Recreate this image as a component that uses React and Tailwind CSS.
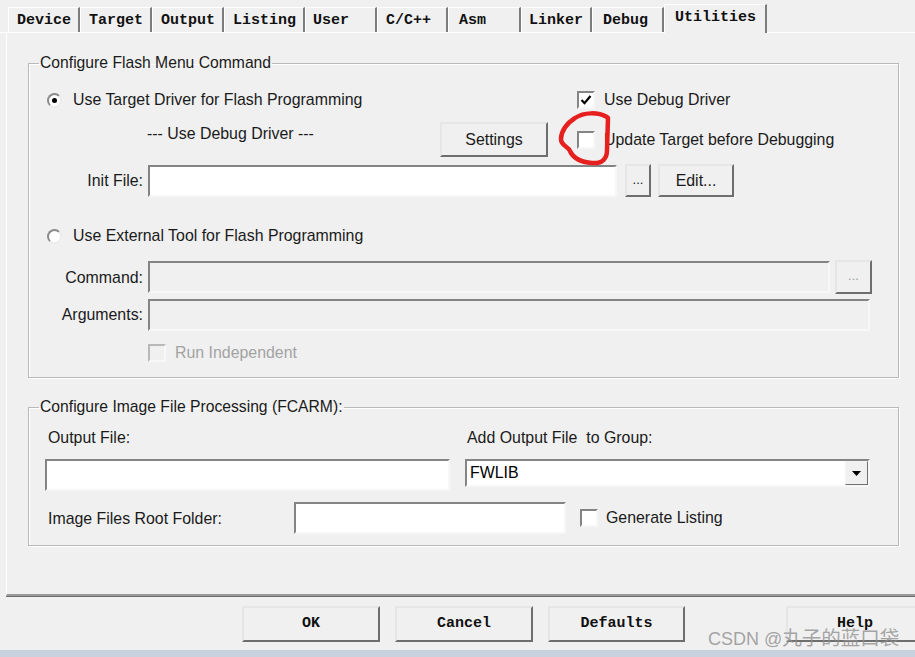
import React from 'react'

const SANS = { fontFamily: '"Liberation Sans", Arial, sans-serif' }
const MONO = { fontFamily: '"Liberation Mono", "Courier New", monospace' }

const TABS = [
  { label: 'Device', w: 'w-[72px]', pad: 'pl-[8px]' },
  { label: 'Target', w: 'w-[72px]', pad: 'pl-[8px]' },
  { label: 'Output', w: 'w-[72px]', pad: 'pl-[8px]' },
  { label: 'Listing', w: 'w-[81px]', pad: 'pl-[8px]' },
  { label: 'User', w: 'w-[72px]', pad: 'pl-[7px]' },
  { label: 'C/C++', w: 'w-[71px]', pad: 'pl-[8px]' },
  { label: 'Asm', w: 'w-[73px]', pad: 'pl-[10px]' },
  { label: 'Linker', w: 'w-[71px]', pad: 'pl-[7px]' },
  { label: 'Debug', w: 'w-[72px]', pad: 'pl-[10px]' },
]

const sunken = 'border-2 border-t-[#848484] border-l-[#848484] border-r-[#f7f7f7] border-b-[#f7f7f7]'
const raised = 'border-2 border-t-[#e6e6e6] border-l-[#e6e6e6] border-r-[#6e6e6e] border-b-[#6e6e6e] bg-[#f0f0f0]'

function Tab({ label, w, pad }) {
  return (
    <div className={`${w} ${pad} h-[25px] flex items-center border-t border-l border-white border-r-2 border-r-[#7c7c7c] text-[15px] font-bold text-[#111] leading-none`}>
      {label}
    </div>
  )
}

function Check({ checked, disabled, className = '' }) {
  return (
    <div
      className={`w-[18px] h-[18px] shrink-0 flex items-center justify-center ${
        disabled
          ? 'border-2 border-t-[#b8b8b8] border-l-[#b8b8b8] border-r-[#f8f8f8] border-b-[#f8f8f8] bg-[#f0f0f0]'
          : `${sunken} bg-white`
      } ${className}`}
    >
      {checked && (
        <svg width="12" height="12" viewBox="0 0 12 12">
          <path d="M1.5 6 L4.5 9.2 L10.5 2" fill="none" stroke="#000" strokeWidth="2.2" />
        </svg>
      )}
    </div>
  )
}

function Radio({ checked }) {
  return (
    <div className="w-[15px] h-[15px] shrink-0 rounded-full bg-white border-2 border-t-[#8a8a8a] border-l-[#8a8a8a] border-r-[#ececec] border-b-[#ececec] flex items-center justify-center">
      {checked && <div className="w-[5px] h-[5px] rounded-full bg-black" />}
    </div>
  )
}

function Btn({ children, className = '', mono }) {
  return (
    <div
      className={`${raised} flex items-center justify-center shrink-0 ${className}`}
      style={mono ? MONO : undefined}
    >
      {children}
    </div>
  )
}

function Group({ title, className = '', children }) {
  return (
    <fieldset className={`w-[871px] ml-[21px] border border-[#b9b9b9] shadow-[inset_1px_1px_0_#fff,1px_1px_0_#fff] ${className}`}>
      <legend className="ml-[10px] px-[1px] text-[15.7px] leading-[18px] text-[#1a1a1a]">{title}</legend>
      {children}
    </fieldset>
  )
}

export default function App() {
  return (
    <div className="relative w-[915px] h-[657px] overflow-hidden bg-[#f0f0f0] flex flex-col text-[15.9px] text-[#1a1a1a]" style={SANS}>
      {/* tabs */}
      <div className="h-[33px] shrink-0 flex items-end pl-[8px] border-b border-white" style={MONO}>
        {TABS.map((t) => (
          <Tab key={t.label} {...t} />
        ))}
        <div className="w-[103px] h-[29px] pl-[10px] pb-[4px] -mb-px relative z-10 bg-[#f0f0f0] flex items-center border-t border-l border-white border-r-2 border-r-[#7c7c7c] text-[15px] font-bold text-[#111] leading-none">
          Utilities
        </div>
      </div>

      {/* panel */}
      <div className="h-[563px] shrink-0 ml-[6px] w-[920px] border-l border-white border-b-2 border-b-[#9a9a9a] shadow-[0_1px_0_#6e6e6e]">
        <Group title="Configure Flash Menu Command" className="mt-[21px] pb-[14px]">
          {/* row 1 */}
          <div className="mt-[18px] h-[20px] flex items-center">
            <div className="w-[548px] pl-[18px] flex items-center">
              <Radio checked />
              <span className="ml-[11px]">Use Target Driver for Flash Programming</span>
            </div>
            <Check checked />
            <span className="ml-[9px]">Use Debug Driver</span>
          </div>

          {/* row 2 */}
          <div className="mt-[12px] h-[35px] flex items-center">
            <div className="w-[411px] pl-[118px] self-start pt-[3px] leading-[18px]">--- Use Debug Driver ---</div>
            <Btn className="w-[108px] h-[35px]">Settings</Btn>
            <Check className="ml-[29px]" />
            <span className="ml-[9px]">Update Target before Debugging</span>
          </div>

          {/* row 3 */}
          <div className="mt-[7px] h-[33px] flex items-center">
            <div className="w-[114px] text-right">Init File:</div>
            <div className={`ml-[5px] w-[469px] h-[32px] bg-white ${sunken}`} />
            <Btn className="ml-[8px] w-[26px] h-[33px] text-[13px] pb-[2px]">...</Btn>
            <Btn className="ml-[7px] w-[76px] h-[33px]">Edit...</Btn>
          </div>

          {/* row 4 */}
          <div className="mt-[29px] h-[20px] flex items-center pl-[18px]">
            <Radio />
            <span className="ml-[11px]">Use External Tool for Flash Programming</span>
          </div>

          {/* row 5 */}
          <div className="mt-[14px] h-[34px] flex items-center">
            <div className="w-[114px] text-right pt-[2px]">Command:</div>
            <div className={`ml-[5px] w-[682px] h-[32px] ${sunken}`} />
            <Btn className="ml-[5px] w-[37px] h-[34px] text-[13px] pb-[2px] text-[#9a9a9a]">...</Btn>
          </div>

          {/* row 6 */}
          <div className="mt-[5px] h-[32px] flex items-center">
            <div className="w-[114px] text-right">Arguments:</div>
            <div className={`ml-[5px] w-[722px] h-[32px] ${sunken}`} />
          </div>

          {/* row 7 */}
          <div className="mt-[12px] h-[20px] flex items-center">
            <Check disabled className="ml-[119px]" />
            <span className="ml-[9px] text-[#a3a3a3]">Run Independent</span>
          </div>
        </Group>

        <Group title="Configure Image File Processing (FCARM):" className="mt-[20px] pb-[11px]">
          <div className="mt-[13px] h-[18px] flex items-center">
            <div className="w-[438px] pl-[19px]">Output File:</div>
            <span className="whitespace-pre">Add Output File  to Group:</span>
          </div>

          <div className="mt-[12px] h-[32px] flex items-start">
            <div className={`ml-[16px] w-[405px] h-[32px] bg-white ${sunken}`} />
            <div className={`ml-[15px] w-[405px] h-[28px] bg-white ${sunken} flex items-center`}>
              <span className="flex-1 pl-[3px] text-black">FWLIB</span>
              <div className="w-[23px] h-[24px] border border-t-[#f4f4f4] border-l-[#f4f4f4] border-r-[#707070] border-b-[#707070] bg-[#f0f0f0] flex items-center justify-center">
                <svg width="9" height="5" viewBox="0 0 9 5">
                  <path d="M0 0 H9 L4.5 5 Z" fill="#000" />
                </svg>
              </div>
            </div>
          </div>

          <div className="mt-[11px] h-[32px] flex items-center">
            <div className="w-[265px] pl-[19px] pt-[2px]">Image Files Root Folder:</div>
            <div className={`w-[272px] h-[32px] bg-white ${sunken}`} />
            <Check className="ml-[14px]" />
            <span className="ml-[8px]">Generate Listing</span>
          </div>
        </Group>
      </div>

      {/* dialog buttons */}
      <div className="mt-[10px] h-[36px] shrink-0 flex pl-[242px] text-[15px] font-bold text-[#111]" style={MONO}>
        <Btn mono className="w-[138px] h-[36px]">OK</Btn>
        <Btn mono className="ml-[15px] w-[138px] h-[36px]">Cancel</Btn>
        <Btn mono className="ml-[15px] w-[137px] h-[36px]">Defaults</Btn>
        <Btn mono className="ml-[101px] w-[138px] h-[36px]">Help</Btn>
      </div>

      <div className="mt-[8px] flex-1 bg-[#c7d2de]" />

      {/* hand-drawn marker */}
      <svg className="absolute left-0 top-0 pointer-events-none" width="915" height="657">
        <path
          d="M607 117 C598 112, 584 112, 575 118 C567 123, 561 131, 561 139 C561 146, 568 146, 570 151 C573 158, 581 162, 592 163 C603 164, 607 158, 607 150 L608 118"
          fill="none"
          stroke="#e5201e"
          strokeWidth="4.5"
          strokeLinecap="round"
          strokeLinejoin="round"
        />
      </svg>

      {/* watermark */}
      <div className="absolute left-[708px] top-[626px] h-[22px] leading-[22px] whitespace-nowrap text-[#8f8f8f]/80 pointer-events-none">
        <span className="text-[18px]" style={SANS}>CSDN @</span>
        <span className="text-[19.5px]" style={{ fontFamily: '"Noto Sans CJK SC", sans-serif' }}>丸子的蓝口袋</span>
      </div>
    </div>
  )
}
